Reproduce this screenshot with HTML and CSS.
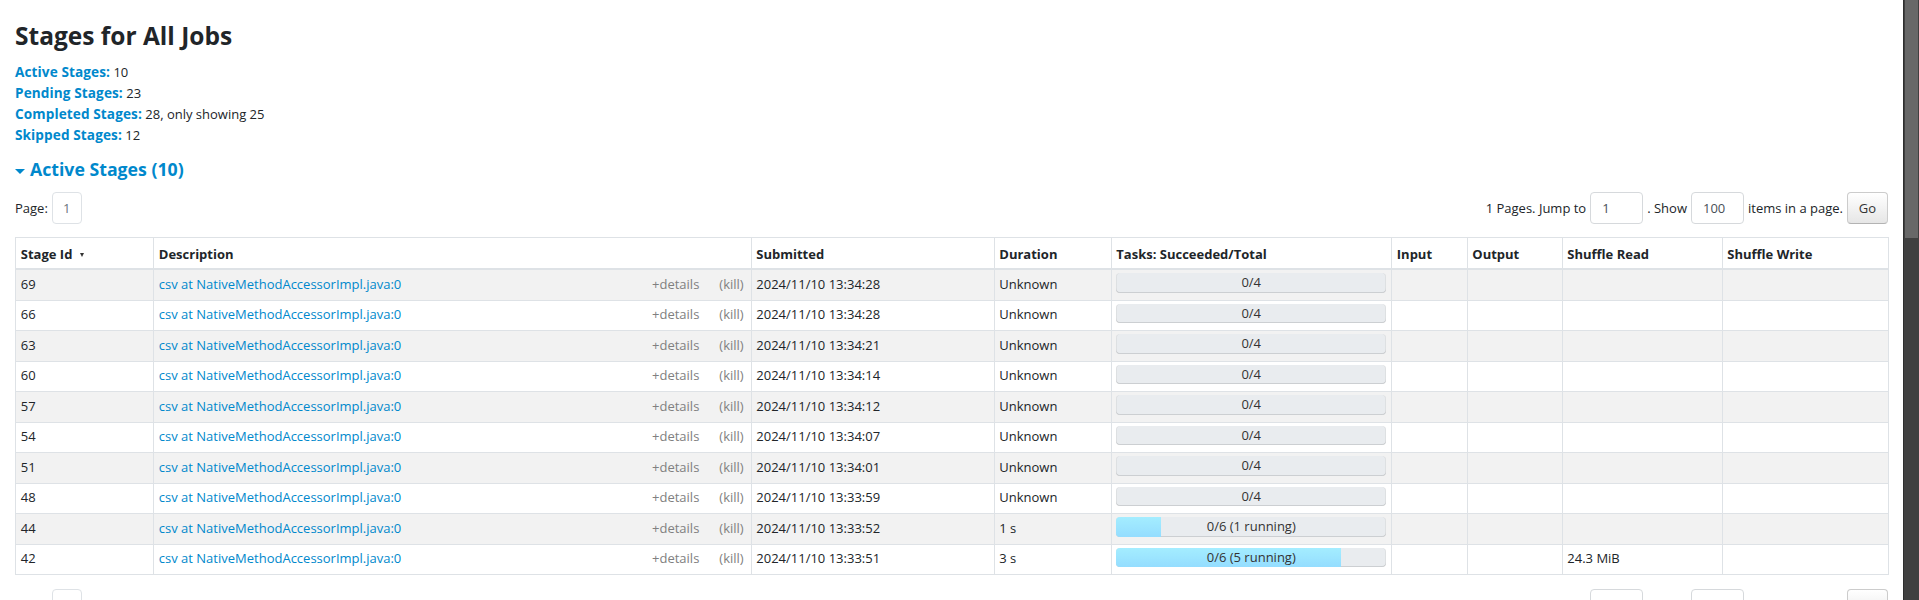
FILE: index.html
```html
<!DOCTYPE html>
<html>
<head>
<meta charset="utf-8">
<title>Stages for All Jobs</title>
<link rel="stylesheet" href="styles.css">
</head>
<body>
<div class="page">
  <h3 class="title">Stages for All Jobs</h3>
  <ul class="summary">
    <li><a class="label" href="#active">Active Stages:</a> 10</li>
    <li><a class="label" href="#pending">Pending Stages:</a> 23</li>
    <li><a class="label" href="#completed">Completed Stages:</a> 28, only showing 25</li>
    <li><a class="label" href="#skipped">Skipped Stages:</a> 12</li>
  </ul>
  <h4 class="section" id="active"><span class="arrow-open"></span><a href="#active">Active Stages (10)</a></h4>

  <div class="pager">
    <div class="pager-left"><span class="page-label">Page:</span><span class="page-box">1</span></div>
    <form class="pager-form">
      <label>1 Pages. Jump to</label>
      <input class="pager-input" type="text" value="1">
      <label>. Show</label>
      <input class="pager-input" type="text" value="100">
      <label>items in a page.</label>
      <button class="btn-go" type="button">Go</button>
    </form>
  </div>

  <table class="stage-table">
    <colgroup>
      <col class="c-id"><col class="c-desc"><col class="c-sub"><col class="c-dur"><col class="c-tasks"><col class="c-in"><col class="c-out"><col class="c-sr"><col class="c-sw">
    </colgroup>
    <thead>
      <tr>
        <th>Stage Id<span class="sort-arrow"></span></th>
        <th>Description</th>
        <th>Submitted</th>
        <th>Duration</th>
        <th>Tasks: Succeeded/Total</th>
        <th>Input</th>
        <th>Output</th>
        <th>Shuffle Read</th>
        <th>Shuffle Write</th>
      </tr>
    </thead>
    <tbody>
      <tr>
        <td>69</td>
        <td><div class="desc"><a class="name-link" href="#">csv at NativeMethodAccessorImpl.java:0</a><span class="details">+details</span><a class="kill" href="#">(kill)</a></div></td>
        <td>2024/11/10 13:34:28</td>
        <td>Unknown</td>
        <td><div class="progress"><span class="progress-text">0/4</span></div></td>
        <td></td><td></td><td></td><td></td>
      </tr>
      <tr>
        <td>66</td>
        <td><div class="desc"><a class="name-link" href="#">csv at NativeMethodAccessorImpl.java:0</a><span class="details">+details</span><a class="kill" href="#">(kill)</a></div></td>
        <td>2024/11/10 13:34:28</td>
        <td>Unknown</td>
        <td><div class="progress"><span class="progress-text">0/4</span></div></td>
        <td></td><td></td><td></td><td></td>
      </tr>
      <tr>
        <td>63</td>
        <td><div class="desc"><a class="name-link" href="#">csv at NativeMethodAccessorImpl.java:0</a><span class="details">+details</span><a class="kill" href="#">(kill)</a></div></td>
        <td>2024/11/10 13:34:21</td>
        <td>Unknown</td>
        <td><div class="progress"><span class="progress-text">0/4</span></div></td>
        <td></td><td></td><td></td><td></td>
      </tr>
      <tr>
        <td>60</td>
        <td><div class="desc"><a class="name-link" href="#">csv at NativeMethodAccessorImpl.java:0</a><span class="details">+details</span><a class="kill" href="#">(kill)</a></div></td>
        <td>2024/11/10 13:34:14</td>
        <td>Unknown</td>
        <td><div class="progress"><span class="progress-text">0/4</span></div></td>
        <td></td><td></td><td></td><td></td>
      </tr>
      <tr>
        <td>57</td>
        <td><div class="desc"><a class="name-link" href="#">csv at NativeMethodAccessorImpl.java:0</a><span class="details">+details</span><a class="kill" href="#">(kill)</a></div></td>
        <td>2024/11/10 13:34:12</td>
        <td>Unknown</td>
        <td><div class="progress"><span class="progress-text">0/4</span></div></td>
        <td></td><td></td><td></td><td></td>
      </tr>
      <tr>
        <td>54</td>
        <td><div class="desc"><a class="name-link" href="#">csv at NativeMethodAccessorImpl.java:0</a><span class="details">+details</span><a class="kill" href="#">(kill)</a></div></td>
        <td>2024/11/10 13:34:07</td>
        <td>Unknown</td>
        <td><div class="progress"><span class="progress-text">0/4</span></div></td>
        <td></td><td></td><td></td><td></td>
      </tr>
      <tr>
        <td>51</td>
        <td><div class="desc"><a class="name-link" href="#">csv at NativeMethodAccessorImpl.java:0</a><span class="details">+details</span><a class="kill" href="#">(kill)</a></div></td>
        <td>2024/11/10 13:34:01</td>
        <td>Unknown</td>
        <td><div class="progress"><span class="progress-text">0/4</span></div></td>
        <td></td><td></td><td></td><td></td>
      </tr>
      <tr>
        <td>48</td>
        <td><div class="desc"><a class="name-link" href="#">csv at NativeMethodAccessorImpl.java:0</a><span class="details">+details</span><a class="kill" href="#">(kill)</a></div></td>
        <td>2024/11/10 13:33:59</td>
        <td>Unknown</td>
        <td><div class="progress"><span class="progress-text">0/4</span></div></td>
        <td></td><td></td><td></td><td></td>
      </tr>
      <tr>
        <td>44</td>
        <td><div class="desc"><a class="name-link" href="#">csv at NativeMethodAccessorImpl.java:0</a><span class="details">+details</span><a class="kill" href="#">(kill)</a></div></td>
        <td>2024/11/10 13:33:52</td>
        <td>1 s</td>
        <td><div class="progress"><div class="progress-fill" style="width: 16.667%"></div><span class="progress-text">0/6 (1 running)</span></div></td>
        <td></td><td></td><td></td><td></td>
      </tr>
      <tr>
        <td>42</td>
        <td><div class="desc"><a class="name-link" href="#">csv at NativeMethodAccessorImpl.java:0</a><span class="details">+details</span><a class="kill" href="#">(kill)</a></div></td>
        <td>2024/11/10 13:33:51</td>
        <td>3 s</td>
        <td><div class="progress"><div class="progress-fill" style="width: 83.333%"></div><span class="progress-text">0/6 (5 running)</span></div></td>
        <td></td><td></td><td>24.3 MiB</td><td></td>
      </tr>
    </tbody>
  </table>

  <div class="pager">
    <div class="pager-left"><span class="page-label">Page:</span><span class="page-box">1</span></div>
    <form class="pager-form">
      <label>1 Pages. Jump to</label>
      <input class="pager-input" type="text" value="1">
      <label>. Show</label>
      <input class="pager-input" type="text" value="100">
      <label>items in a page.</label>
      <button class="btn-go" type="button">Go</button>
    </form>
  </div>
</div>
<div class="scrollbar"><div class="scrollbar-thumb"></div></div>
</body>
</html>
```
FILE: styles.css
```css
* { box-sizing: border-box; }

html, body {
  margin: 0;
  padding: 0;
  background: #fff;
  overflow: hidden;
}

body {
  font-family: "Open Sans", "Noto Sans", sans-serif;
  font-size: 13px;
  color: #212529;
}

a { text-decoration: none; color: #0088cc; }

.page {
  margin-right: 16px;
  padding: 20.5px 15px 0;
}

.title {
  margin: 0 0 12px;
  font-size: 24.5px;
  line-height: 29.4px;
  font-weight: 700;
  color: #212529;
}

.summary {
  list-style: none;
  margin: 0;
  padding: 0;
  line-height: 21px;
}

.summary li {
  height: 21px;
  overflow: visible;
}

.summary .label {
  font-weight: 700;
  font-size: 13.6px;
  line-height: 16px;
  letter-spacing: 0.1px;
}

.section {
  display: flex;
  align-items: flex-start;
  margin: 13.5px 0 0;
  font-size: 17.7px;
  line-height: 21.6px;
  font-weight: 700;
}

.arrow-open {
  width: 0;
  height: 0;
  margin: 10px 5px 0 0;
  border-left: 5px solid transparent;
  border-right: 5px solid transparent;
  border-top: 5px solid #0088cc;
}

.pager {
  display: flex;
  justify-content: space-between;
  align-items: center;
  height: 32px;
  margin-top: 11px;
}

.pager-left {
  display: flex;
  align-items: center;
}

.page-label { margin-right: 4px; }

.page-box {
  display: flex;
  align-items: center;
  justify-content: center;
  width: 30px;
  height: 32px;
  border: 1px solid #dee2e6;
  border-radius: 4px;
  color: #6c757d;
}

.pager-form {
  display: flex;
  align-items: center;
  gap: 4px;
  margin: 0;
}

.pager-form label { color: #212529; }

.pager-input {
  width: 53px;
  height: 32px;
  padding: 0 0 0 11px;
  border: 1px solid #d6d9dc;
  border-radius: 4px;
  font-family: inherit;
  font-size: 13px;
  color: #495057;
  background: #fff;
}

.btn-go {
  width: 41px;
  height: 32px;
  border: 1px solid #ccc;
  border-bottom-color: #b3b3b3;
  border-radius: 4px;
  background: linear-gradient(#ffffff, #e6e6e6);
  font-family: inherit;
  font-size: 13px;
  color: #333;
  padding: 0;
}

.stage-table {
  width: 100%;
  margin: 13px 0 14px;
  border-collapse: collapse;
  table-layout: fixed;
  border: 1px solid #dee2e6;
}

.c-id { width: 138px; }
.c-desc { width: 597.5px; }
.c-sub { width: 243px; }
.c-dur { width: 117px; }
.c-tasks { width: 280.5px; }
.c-in { width: 75.5px; }
.c-out { width: 95px; }
.c-sr { width: 160px; }
.c-sw { width: 166.5px; }

.stage-table th,
.stage-table td {
  border: 1px solid #dee2e6;
  padding: 4.8px;
  line-height: 19.9px;
  text-align: left;
  vertical-align: top;
  white-space: nowrap;
}

.stage-table th {
  padding-top: 6.7px;
  padding-bottom: 3.6px;
  vertical-align: bottom;
  border-bottom: 2px solid #dee2e6;
  font-weight: 700;
  color: #212529;
}

.stage-table tbody tr:nth-child(odd) { background: #f2f2f2; }

.sort-arrow {
  display: inline-block;
  width: 0;
  height: 0;
  margin-left: 8px;
  vertical-align: 2px;
  border-left: 2.5px solid transparent;
  border-right: 2.5px solid transparent;
  border-top: 4px solid #333;
}

.desc {
  display: flex;
  align-items: baseline;
}

.name-link { flex: 1 1 auto; }

.details {
  font-size: 13px;
  color: #808080;
}

.kill {
  margin: 0 2px 0 20px;
  color: #808080;
}

.progress {
  position: relative;
  height: 19.5px;
  margin-top: -1.8px;
  border-radius: 4px;
  background: #e9ecef;
  box-shadow: inset 0 -1px 0 rgba(0, 0, 0, 0.12), inset 1px 0 0 rgba(0, 0, 0, 0.05), inset -1px 0 0 rgba(0, 0, 0, 0.05);
  overflow: hidden;
}

.progress-fill {
  height: 100%;
  background: linear-gradient(#a4edff, #94ddff);
}

.progress-text {
  position: absolute;
  left: 0;
  right: 0;
  top: 0;
  line-height: 19.5px;
  text-align: center;
  color: #333;
}

.scrollbar {
  position: fixed;
  top: 0;
  right: 0;
  width: 16px;
  height: 100%;
  background: #404040;
  border-left: 1px solid #2e2e2e;
}

.scrollbar-thumb {
  position: absolute;
  top: 0;
  left: 1px;
  right: 1px;
  height: 238px;
  background: #686868;
}
```
